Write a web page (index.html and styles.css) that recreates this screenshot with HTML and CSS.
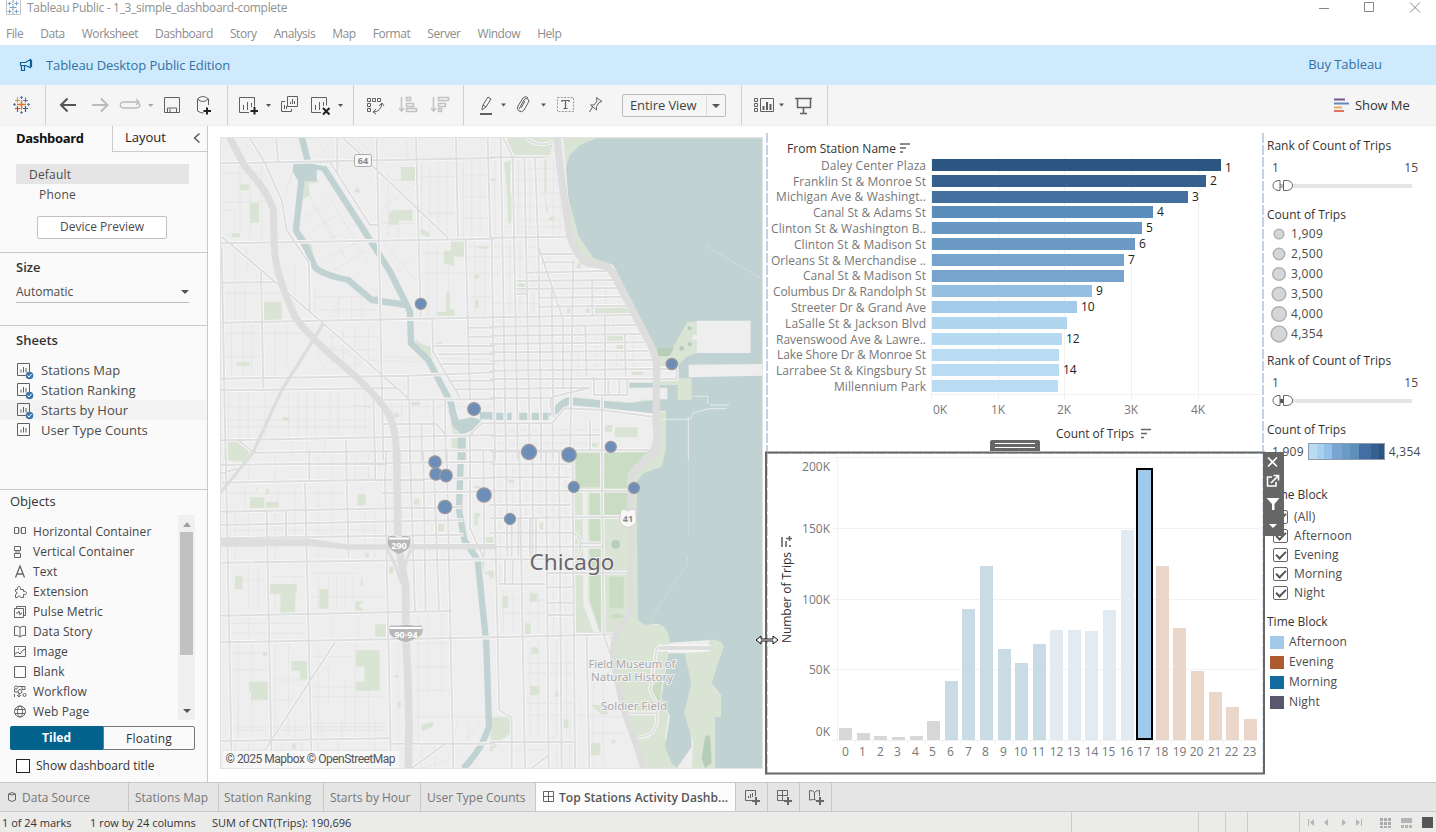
FILE: index.html
```html
<!DOCTYPE html>
<html lang="en">
<head>
<meta charset="utf-8">
<title>Tableau Public - 1_3_simple_dashboard-complete</title>
<link rel="stylesheet" href="styles.css">
</head>
<body>
<div class="app">
<header class="titlebar">
  <svg class="app-icon" width="16" height="16" viewBox="7 -1 16 16"><path d="M7.500-1V14.500H21.500V0" fill="none" stroke="#c4c4c4"/><path d="M14 4v7M10.500 7.500h7M10.500 1.500v4M8.500 3.500h4M17.500 1.500v4M15.500 3.500h4M10.500 9.500v4M8.500 11.500h4M17.500 9.500v4M15.500 11.500h4M14 0v3M14 12v2" stroke="#77a3cd" fill="none"/></svg>
  <span class="title-text">Tableau Public - 1_3_simple_dashboard-complete</span>
  <svg class="window-buttons" width="104" height="16" viewBox="1318 0 104 16"><path d="M1319 8.500h10M1364.500 2.500h9v9h-9zM1410 2.500l10 10m0-10l-10 10" fill="none" stroke="#888"/></svg>
</header>
<nav class="menubar"><span>File</span><span>Data</span><span>Worksheet</span><span>Dashboard</span><span>Story</span><span>Analysis</span><span>Map</span><span>Format</span><span>Server</span><span>Window</span><span>Help</span></nav>
<div class="banner">
  <svg width="14" height="14" viewBox="19 58 14 14"><path d="M20.500 62.500h5l5-3v8l-5-2h-5zM21.500 65.500v5h3v-5M31.500 60v7" fill="none" stroke="#07629b" stroke-width="1.200"/></svg>
  <span class="edition">Tableau Desktop Public Edition</span><span class="buy">Buy Tableau</span>
</div>
<div class="toolbar">
  <svg width="45" height="40" viewBox="0 85 45 40" fill="none" stroke-width="1.200">
    <path d="M21.500 100.500v9M17 104.500h9" stroke="#e0762e" stroke-width="1.500"/><path d="M17.500 97.500v5M15 100.500h5" stroke="#c99b45"/><path d="M25.500 97.500v5M23 100.500h5" stroke="#5d7896"/><path d="M17.500 106v6M15 108.500h5" stroke="#b54a34"/><path d="M25.500 106v6M23 108.500h5" stroke="#345b8b"/><path d="M21.500 96v3M20 97.500h3M21.500 111v3M20 112.500h3M14.500 103v3M13 104.500h3M28.500 103v3M27 104.500h3" stroke="#5e83ad"/>
  </svg>
  <svg class="group" width="181" height="40" viewBox="46 85 181 40">
    <path d="M76 105H61M67.500 98.500L61 105l6.500 6.500" stroke="#555" stroke-width="2"/>
    <g stroke="#bbb" stroke-width="2"><path d="M92 105h15M101 98.500l6.500 6.500-6.500 6.500"/><path d="M138 103c4 3 1 5-2 5h-12c-5 0-5-6 0-6h14M136 99l3 3-3 3" stroke-width="1.300"/></g>
    <path d="M148 104h5.500l-2.700 3z" fill="#aaa" stroke="none"/>
    <path d="M164.500 97.500h15v15h-15zM167.500 112v-4h9v4M170 109v3"/>
    <path d="M197.500 99v12q3 2 6 2M197.500 99q5-5 11 0v6M197.500 99q5 5 11 0"/><path d="M207 107.500v7M203.500 111h7.500" stroke="#222" stroke-width="2"/>
  </svg>
  <svg class="group" width="125" height="40" viewBox="228 85 125 40">
    <path d="M249 112.500h-9.500v-15h15v9M243.500 110v-5M247.500 110v-8M251.500 107v-4"/><path d="M254.500 107v7.500M250.500 111h7.500" stroke="#222" stroke-width="2"/>
    <path d="M266 104h5l-2.500 3zM338 104h5l-2.500 3z" fill="#555" stroke="none"/>
    <path d="M287.500 96.500h10v10h-10zM285 101.500h-3.500v10h10V109M290.500 104v-2M292.500 104v-5M294.500 104v-3M284.500 109v-4M286.500 109v-3"/>
    <path d="M321 112.500h-9.500v-15h15v8M315.500 110v-5M319.500 110v-8M323.500 106v-4"/><path d="M323 108l6.500 6.500m0-6.500l-6.500 6.500" stroke="#222" stroke-width="2"/>
  </svg>
  <svg class="group" width="109" height="40" viewBox="354 85 109 40">
    <path d="M367.500 98.500h3v3h-3zM372.500 98.500h3v3h-3zM377.500 98.500h3v3h-3zM367.500 103.500h3v3h-3zM367.500 108.500h3v3h-3zM382 103q-1 9-9 9M379 106l3-3 2 3M376 109l-3 3 3 2"/>
    <g stroke="#c2c2c2"><path d="M401.500 97v14M399 108l2.500 3 2.500-3M406.500 97.500h4v3h-4zM406.500 103.500h7v3h-7zM406.500 108.500h10v3h-10z" stroke-width="1.500"/><path d="M433.500 97v14M431 108l2.500 3 2.500-3M438.500 97.500h10v3h-10zM438.500 103.500h7v3h-7zM438.500 108.500h3v3h-3z" stroke-width="1.500"/></g>
  </svg>
  <svg class="group" width="158" height="40" viewBox="464 85 158 40">
    <path d="M480 114h12" stroke-width="2"/><path d="M482 109l1-4 5-8 3 2-5 8-4 3zM483 105l3 2"/>
    <path d="M501 103.500h5l-2.500 3zM541 103.500h5l-2.500 3z" fill="#555" stroke="none"/>
    <path d="M519 109l5-9q2-3 4-1t0 4l-4 7q-2 3-5 1t-1-5l5-8q3-3 5 0M521 108l4-7"/>
    <path d="M557.500 97.500h16v14h-16z" stroke-dasharray="2 1.300" stroke="#999"/><path d="M562 102v-1.500h7v1.500M565.500 100.500v8M563.500 108.500h4" stroke-width="1.200"/>
    <path d="M596.500 97.500l5.500 4-3 1-2.500 4v3.500l-6-5h3.500l3-4zM592.500 107l-3 5"/>
  </svg>
  <div class="fit-select"><span>Entire View</span><div><b class="caret"></b></div></div>
  <svg width="15" height="40"></svg>
  <svg class="group" width="85" height="40" viewBox="742 85 85 40">
    <path d="M754.500 98.500h3v3h-3zM754.500 103.500h3v3h-3zM754.500 108.500h3v3h-3zM760.500 98.500h13v13h-13z"/><path d="M763.500 110v-4M767 110v-8M770.500 110v-6" stroke-width="2"/><path d="M779 103.500h5l-2.500 3z" fill="#555" stroke="none"/>
    <path d="M795 98.500h17M797.500 99v8.500h13V99M803.500 108v5M800 113.500h7" stroke-width="1.500"/>
  </svg>
  <svg class="group" width="2" height="40"></svg>
  <div class="show-me"><svg width="16" height="14" viewBox="0 0 16 14"><path d="M0 1.500h11" stroke="#725a86" stroke-width="2"/><path d="M0 5.500h15" stroke="#6487c0" stroke-width="2"/><path d="M0 9.500h8" stroke="#edaa67" stroke-width="2"/><path d="M0 13h10" stroke="#dd765c" stroke-width="2"/></svg>Show Me</div>
</div>

<main class="workspace">
<aside class="sidebar">
  <div class="side-tabs"><b>Dashboard</b><div>Layout<svg width="8" height="10" viewBox="0 0 8 10"><path d="M6.500 0.500l-5 4.500 5 4.500" fill="none" stroke="#555" stroke-width="1.400"/></svg></div></div>
  <section class="devices"><div class="device selected">Default</div><div class="device phone">Phone</div><div class="preview">Device Preview</div></section>
  <section class="size"><h3>Size</h3><div class="size-select">Automatic<i class="caret"></i></div></section>
  <section class="sheets"><h3>Sheets</h3>
    <div class="sheet"><svg class="si" viewBox="0 0 17 18"><use href="#sheet"/><use href="#check"/></svg>Stations Map</div>
    <div class="sheet"><svg class="si" viewBox="0 0 17 18"><use href="#sheet"/><use href="#check"/></svg>Station Ranking</div>
    <div class="sheet hovered"><svg class="si" viewBox="0 0 17 18"><use href="#sheet"/><use href="#check"/></svg>Starts by Hour</div>
    <div class="sheet"><svg class="si" viewBox="0 0 17 18"><use href="#sheet"/></svg>User Type Counts</div>
  </section>
  <section class="objects"><h3>Objects</h3>
    <div class="object-area"><div class="object-list">
      <div><svg viewBox="0 0 13 13"><path d="M.5 2.500h4v6h-4zM7.500 2.500h4v6h-4z"/><path d="M5 3h2v5H5z" fill="#ccc" stroke="none"/></svg>Horizontal Container</div>
      <div><svg viewBox="0 0 13 13"><path d="M.5 1.500h6v4h-6zM.5 8.500h6v4h-6z"/><path d="M1 6h5v2H1z" fill="#bbb" stroke="none"/></svg>Vertical Container</div>
      <div><svg viewBox="0 0 13 13"><path d="M1.500 12.500L6 1l4.500 11.500M3 9h6" stroke-width="1.300"/></svg>Text</div>
      <div><svg viewBox="0 0 13 13"><path d="M1.500 4.500h2c-1-4 4-4 3 0h3v2c4-1 4 4 0 3v3h-3c0-2-3-2-3 0h-2v-3c2 0 2-3 0-3z"/></svg>Extension</div>
      <div><svg viewBox="0 0 13 13"><path d="M.5 3.500h9v9h-9zM2.500 3V1.500h9v9H10M2 8h2l1-2 1 4 1-2h1"/></svg>Pulse Metric</div>
      <div><svg viewBox="0 0 13 13"><path d="M.5 1.500q3-1 5.500 1 2.500-2 5.500-1v9q-3-1-5.500 1.500-2.500-2.500-5.500-1.500zM6 2.500V12"/></svg>Data Story</div>
      <div><svg viewBox="0 0 13 13"><path d="M.5 1.500h11v10H.5zM1 9l3-2 2 2 3-4 3-1M4 4h1"/></svg>Image</div>
      <div><svg viewBox="0 0 13 13"><path d="M.5 1.500h11v11H.5z"/></svg>Blank</div>
      <div><svg viewBox="0 0 13 13"><circle cx="2" cy="2.500" r="1.500"/><circle cx="6" cy="6.500" r="2"/><circle cx="10.500" cy="10" r="1.500"/><path d="M4 1.500h7v3H8M4 7H.5V4M5 8v4M3 10l2 2 2-2M8 2v2M.5 12v-3"/></svg>Workflow</div>
      <div><svg viewBox="0 0 13 13"><circle cx="6" cy="6.500" r="5.500"/><ellipse cx="6" cy="6.500" rx="2.500" ry="5.500"/><path d="M1 4.500h10M1 8.500h10"/></svg>Web Page</div>
    </div><div class="scroll"><i class="up"></i><b></b><i class="caret"></i></div></div>
    <div class="mode"><b>Tiled</b><span>Floating</span></div>
    <div class="show-title"><i></i>Show dashboard title</div>
  </section>
</aside>

<svg class="map" width="543" height="632" viewBox="220 137 543 632">
<defs>
  <g id="sheet" fill="none" stroke="#606060"><path d="M.5.500h12v12H.5zM4 9.500v-3M6.500 9.500V4M9 9.500V5"/></g>
  <g id="check"><circle cx="12.500" cy="12.500" r="3.800" fill="#3e78ad"/><path d="M10.500 12.500l1.500 1.500 2.500-3" fill="none" stroke="#fff"/></g>
  <g id="streets">
    <g transform="translate(215 130) scale(.33333)"><path d="M18 100L840 84M18 340L840 326M18 458L180 456M18 578L840 562M18 746L580 737 840 727M18 781L545 774M505 809L840 808M18 931L840 915M115 968L840 960M20 350L32 990M138 425L145 775M485 25L505 990M603 25L617 560M723 25L729 320M818 25L826 325M752 330L765 810M367 25V130M183 25L190 95M105 25L150 100 200 210 215 300 282 400 284 545M20 320L180 455 330 585 580 805M385 25L700 325M345 97L465 285H487M580 740V805M652 568L654 665 735 803M655 648H840M670 673H840M680 702H840M700 752H840M720 778H840M760 593H840M760 620H840M505 882H665L692 915M475 810L480 990M583 810L585 990M620 882V990M655 810L658 990M690 810L692 990M765 990V915L800 880H840M393 930L395 990M70 931L115 966"/></g>
    <g transform="translate(490 130) scale(.33333)"><path d="M0 82H170M0 323L230 320M150 372H250M155 397H255M110 428L370 422M80 453L375 450M80 477L390 474M80 492H112M150 503L402 500M150 530L415 527M0 562L430 555M0 590L440 585M0 617L455 612M0 642L463 637M0 667L475 662M0 692L490 690M0 722L560 716M0 747H560V718M0 777L300 773M0 803H185M0 880H185L225 835 335 840 490 860M0 918L330 915M0 962L505 960M32 25L48 990M68 80L82 870M103 80L118 870M135 80L145 350 215 555M145 350L153 870M185 480L190 860M218 560L220 775M250 390L240 990M286 590L290 740M345 560L345 800M405 615L407 740M307 452V560M300 745H312V795H412V745M388 745V795M355 745V795M300 875V960M336 800V990M195 860Q170 815 190 800L300 773M5 325L15 990M82 880V990M118 880V990M153 880V990M188 880V990M40 25L68 80M110 25Q150 55 190 35"/></g>
    <g transform="translate(215 450) scale(.33333)"><path d="M18 45L840 35M18 98L840 83M18 70L75 55M500 130L840 124M18 185L740 171M18 225L745 210M18 265L745 254M18 338L840 328M18 497L710 483M18 577L840 562M18 873L523 865M530 881H840M32 0L50 955M155 180L170 955M213 180V260M270 95L290 955M283 0V90M393 0L401 325M510 80L528 955M480 0V90M585 0L600 485M625 0L632 485M658 90L672 485M695 0L715 955M765 0V235L805 322M805 0L808 320M360 577L150 900M590 955L690 882M515 0L510 90M840 285H600"/></g>
    <g transform="translate(490 450) scale(.33333)"><path d="M0 5H240M0 43H240M0 82H240M0 122H420M0 165H240M0 205L420 200M0 248H250M0 290H335M0 328H170M170 370L415 368M25 402H165M170 412H250M170 458H250M170 495H250M0 562L380 553M0 876H250M10 0L28 780 65 803V955M48 0L52 320M88 0L105 955M128 0V328M168 0L176 955M207 0L215 955M247 0L255 955M290 560L298 955M335 0L341 550M45 325V400M68 325V400M85 205V320M120 205V320M138 205V320M65 205V320M176 915L125 955M340 550L370 640M250 250Q275 260 270 288 272 320 250 325M270 280H332M415 790H500M500 595H660M500 595L480 720 500 760 500 820Q490 860 445 862"/></g>
  </g>
  <g id="highways">
    <g transform="translate(215 130) scale(.33333)"><path stroke-width="21" d="M40 15L90 110Q160 185 175 240L178 350Q180 430 240 560 280 620 400 720 490 800 520 850 545 890 545 1000"/><path stroke-width="10" d="M325 580L295 630 200 780 115 966 95 990"/></g>
    <g transform="translate(490 130) scale(.33333)"><path stroke-width="22" d="M200 15L215 150 240 320Q260 380 295 400L345 408Q362 415 375 440L490 660 500 700 498 880 505 930Q505 950 480 970L430 1030"/></g>
    <g transform="translate(215 450) scale(.33333)"><path stroke-width="23" d="M545 0L549 280 572 410V560L578 660 582 830 580 955"/><path stroke-width="16" d="M15 282L280 280 400 291 840 290"/><path stroke-width="9" d="M120 0L15 130M15 270L280 270 380 286M515 300Q530 310 560 400M590 300Q570 320 565 400"/></g>
    <g transform="translate(490 450) scale(.33333)"><path stroke-width="17" d="M505 0L440 50Q418 75 420 110L421 490 380 550Q364 575 370 640L400 780 465 960"/></g>
  </g>
</defs>
<path d="M220 137h543v632H220z" fill="#eee"/>
<g class="lanes">
  <g transform="translate(215 130) scale(.33333)"><path d="M18 130H140M18 218L165 213M75 105V320M105 120V320M140 105V330M18 240H60V340M60 350V450M95 350V420M300 25L345 85M405 25L475 110M430 25L485 85M240 100L205 215M275 180L400 400M290 220L360 340M330 180L460 400M345 145L560 470M260 270L330 220M280 310L390 240M310 350L440 270M330 390L470 310M360 420L490 340M500 330L600 450M520 380L560 340M540 430L600 380M500 240L600 160M520 130V320M550 260V320M575 30V90M500 150H600M500 280H600M620 100V320M645 100V325M670 90V290M695 90V320M745 95V322M770 90V322M795 90V322M615 140H720M615 250H720M740 135H825M740 200H825M740 265H825M615 430H750M640 340V560M665 350V560M700 400V560M620 370H750M760 350H840M760 380H840M760 430H840M780 330V560M810 340V560M760 500H840M25 490H200M60 460V570M90 460V570M240 400V540M300 480V570M370 500V570M410 500V570M440 500V570M300 500H490M300 540H490M18 610H260M50 585V740M85 585V740M110 585V740M180 585V740M215 585V700M25 680H140M350 600V700M385 600V700M420 590V720M460 590V700M340 620H500M340 660H500M310 640Q300 720 360 720L490 680 840 690M440 700Q410 710 420 740M380 500L320 590M320 640L440 690 750 700M40 785V925M75 785V925M100 785V925M150 785V925M220 785V925M250 785V925M275 785V925M300 785V925M345 785V925M370 785V925M420 785V925M450 785V925M35 830H470M35 870H470M35 890H470M230 935V980M275 935V980M330 935V980M505 830H840M530 810V880M560 810V880"/></g>
  <g transform="translate(490 130) scale(.33333)"><path d="M50 115H210M50 150H205M50 190H215M50 230H220M50 270H220M50 290H220M15 90V320M85 90V320M120 90V320M190 90V320M210 150V320M15 350H140M15 380H140M15 430H75M60 330V550M90 330V550M130 440V550M15 520H150M347 450V555M370 540V600M320 530H420M265 590V760M320 620V720M380 620V710M430 620V710M20 900H330M20 940H330"/></g>
  <g transform="translate(215 450) scale(.33333)"><path d="M60 10V90M100 10V90M180 10V90M310 10V90M350 10V90M420 10V90M460 10V90M90 110V180M190 110V180M240 110V180M310 110V180M350 110V180M440 110V180M30 130H390M60 190V330M100 190V260M180 190V330M240 190V260M310 190V325M350 190V260M450 190V325M480 190V325M40 240H500M100 340V480M130 360V480M50 390H150M170 380H270M180 400V480M240 390V480M290 370H430M310 380V480M340 380V480M365 380V480M390 380V470M415 380V450M290 440H510M50 520H270M50 550H270M100 500V560M350 500V560M430 500V560M70 580V850M110 580V850M180 580V860M220 580V860M310 600V860M340 650V770M390 690V830M420 580V860M460 600V860M50 610H160M50 660H160M170 690H270M170 750H270M290 620H410M290 710H500M290 740H500M290 820H510M50 830H510M30 840H510M70 810V865M190 810V865M240 810V865M320 810V865M380 810V865M480 810V865M550 580V940M610 500V880M640 490V730M680 490V730M600 580H710M600 650H710M600 720H710M600 800H820M760 820V880M30 900H520M60 870V955M100 870V955M200 870V955M260 870V955M310 870V955M370 870V955M480 870V955M620 880V955M660 880V955M730 810L700 930 620 955M800 810L720 920"/></g>
  <g transform="translate(490 450) scale(.33333)"><path d="M40 420V550M70 420V550M120 420V550M145 420V550M40 450H165M40 490H165M120 570V860M145 570V860M110 640H250M110 670H250M110 760H250M110 795H350M200 570V860M230 570V860M240 800V950M310 700V940M340 700V940M300 850H400M300 800H400M200 890V950M70 900H170M30 40V400M68 0V200M108 0V200M150 0V200M190 0V550M228 0V550"/></g>
</g>
<g class="parks">
  <g transform="translate(215 130) scale(.33333)"><path d="M558 111h42v42h-42zM105 219h27v59h-27zM50 310h25v12H50zM75 163h27v18H75zM147 515h53v55h-53zM65 697h38v11H65zM202 862h22v10h-22zM522 250l15-10h55v32h-35v-8l-10 20h-24zM708 332h39v48h-30v30l-30-10v-38h21zM693 488h12v50h14v20h-52v-12h26zM418 185l8-15 12 20zM615 295l27 12v15l-25-10zM777 435h15v10h-15zM780 510h12v25h-12zM790 348h28v8h-28zM824 145h16v8h-16zM258 150h52v8l-30 2 5 35-25 15zM245 295l45 50 8 50-25-30zM600 627l20 15 28 8v30l-45-25zM395 825l75 3v5zM585 815h30v11h-30zM537 848h14v14h-14zM665 637h15v10h-15zM705 870l20 35 30 10-40 0zM38 935h40l30 25-20 30H40zM710 925h20v30h-20zM470 500l20-5v10z"/></g>
  <g transform="translate(490 130) scale(.33333)"><path d="M50 25H190L180 75H70zM220 25H330L245 80 230 130 270 310 310 385 345 395 270 405 245 320zM82 460h23v28H82zM42 100l20-10-2 90 8 20-5 80h-8l-5-110zM163 85h6v105h-6zM163 190l12 55-5 5zM177 260h16v12h-16zM265 395l10 20h-15zM315 528h90l15 22H315zM288 535h11v14h-11zM232 535h12v15h-12zM350 617h52v16h-52zM380 645h22v12h-22zM425 725h35v10h-35zM350 750h10v35h-10zM500 665l55-15 37-75h28v95l-30 10-25 30 3 27h40v65h-42v-45h-55zM345 885h22v20h-22zM375 892h68v30h-68zM500 845h29v145h-50zM305 940h18v10h-18zM255 965h200l20 25H255zM340 812l-60-10 60 20h130v-15l-40 10z"/></g>
  <g transform="translate(215 450) scale(.33333)"><path d="M38 0h65l-18 35-47-5zM105 142h43v32h-43zM153 155h37v18h-37zM153 118h10v15h-10zM427 132h25v34h-25zM60 377h22v40H60zM165 402h80v30h-5v57h-44v-57h-31zM313 418h27v58h-27zM421 454h26l-16 14 16 14h-26zM480 523h32v37h-32zM423 600h71v122h-71v-27h25v-45h-25zM102 695h57v56h-51v-25h-6zM229 633h48v55h-22v-26h-26zM144 605h12v12h-12zM232 880h10v17h-10zM547 754h10v18h-10zM618 825l36-10v15l-32 14zM522 350h14v20h-14zM668 222h18v22h-18zM597 148h16v16h-16zM437 388h6v20h-6zM452 308h10v14h-10zM120 103l10 18-5 0zM776 107h20v8h-20zM778 190h20l-10 15v20h-10zM812 262h28v16h-28zM538 675h12v8h-12zM808 370l-10-40 10 0v36l32-5v25z"/></g>
  <g transform="translate(490 450) scale(.33333)"><path d="M250 0H527L515 50 460 75 441 100 443 510 465 525 525 525 545 550 535 600 515 720 535 800 525 860 555 955H450L400 780 370 640 370 570 340 548H258zM120 430h22v25h-22zM38 438h16v36H38zM105 520h17v32h-17zM124 592h20v20h-20zM121 708h28v28h-28zM195 725h10v15h-10zM303 878h28v38h-28zM220 808h15v25h-15zM150 218h9v20h-9zM55 88h18v10H55zM5 800h58v50l-30 20-33 40zM364 870h12v10h-12zM185 860h8v5h-8zM303 765h50v28h-20zM0 260l10 10-10 10zM0 360l10 15-10 15z"/></g>
</g>
<g class="water">
  <g transform="translate(215 130) scale(.33333)"><path d="M250 20H270L288 92 268 92zM235 102L285 100 325 108 340 123 305 120 305 153 250 154 233 125zM700 840L720 840 732 870 770 862 800 870 775 900 740 915 715 890zM795 846h45v22h-45zM728 920h24v70h-24z"/><path class="river" d="M260 145L243 300 275 355 300 412Q320 433 400 450L470 510 575 525M325 112L440 290 525 425 585 545 588 640 640 690 708 820 722 885"/></g>
  <g transform="translate(490 130) scale(.33333)"><path d="M320 25L818 25V990H528V842L505 843 505 670 370 405 310 385 265 315 235 200 228 110 240 75 270 45zM0 848h65v22H0zM80 848h35v22H80zM125 848h50v22h-50zM175 855Q210 800 245 802L340 812 420 820 490 810V850L330 833 235 825 195 860zM415 758h75v15h-75z"/></g>
  <g transform="translate(215 450) scale(.33333)"><path class="river" d="M738 0L732 180 748 270 788 330 814 580 822 830Q800 900 745 955"/></g>
  <g transform="translate(490 450) scale(.33333)"><path d="M527 0H818V955H675V800H693V735L665 700Q670 650 690 620L701 590Q690 567 660 570L540 578Q535 525 500 522L465 525 443 510 440 95 460 70 515 50zM535 610H585L605 700 583 790 600 830 605 890 560 955 545 940 525 890 540 800 515 740z"/></g>
</g>
<g transform="translate(490 130) scale(.33333)"><path d="M500 665l50-15 42-75h28v95l-30 10-25 25-5 40h45v65h-42v-45h-55z" class="park-fill"/><path d="M498 655l55-3-15 27h-35z" fill="#b8ceb9"/><path d="M620 572h162v97H620v-40h-13v-14h13zM596 704l222-2v35l-222 5zM470 773h62v35h-55zM505 708h60v40h-60z" fill="#eee"/><path d="M652 349L816 447" stroke="#e5e9e9" stroke-width="2" stroke-dasharray="4 2"/><path d="M608 799h45v23M600 870l10-22 50-12h50M660 825h58M595 860V990M490 868h105" fill="none" stroke="#e7ebeb" stroke-width="3"/><circle cx="575" cy="655" r="7" fill="#b4cdb8"/><circle cx="599" cy="595" r="6" fill="#b4cdb8"/><circle cx="599" cy="643" r="6" fill="#b4cdb8"/></g>
<g transform="translate(490 450) scale(.33333)"><path d="M660 568Q698 570 701 590L690 622 665 700 693 735V800H675V955H605L610 880 583 790 605 700 585 610 650 605z" class="park-fill"/><path d="M258 10H330V110H258zM343 10L485 5 412 70V195H343zM300 130H332V548L300 450zM358 380h43v95h-43zM355 498l30-8 20 10-30 8zM515 690l-30 20v60l25-20z" fill="#cadcc3"/><circle cx="377" cy="283" r="13" fill="#b5cdb9"/><path d="M645 860l15-5 5 85-20 15-10-30z" fill="#b5cdb9"/><path d="M278 120l15 0 2 330 35 100-20-5-30-80z" fill="#eee"/><path d="M593 320L590 345 480 510M596 0V250" fill="none" stroke="#dfe5e4" stroke-width="2" stroke-dasharray="4 2"/></g>
<use href="#streets" class="road casing"/><use href="#streets" class="road"/>
<g class="highway-edge wide"><use href="#highway-outline"/></g>
<use href="#highways" class="highway"/>
<g transform="translate(490 450) scale(.33333)"><path d="M505 594H660" stroke="#fff" stroke-width="20"/><path d="M505 594H660" stroke="#dedede" stroke-width="13"/></g>
<g class="shields"><rect x="354.500" y="154.500" width="17" height="12" rx="2" fill="#f7f7f7" stroke="#aaa"/><text x="363" y="164" fill="#888">64</text><path d="M621 510l3-1 4 2 4-2 4 1v6c2 10-5 10-8 12-3-2-10-2-8-12z" fill="#f8f8f8" stroke="#ccc"/><text x="628" y="521.500" fill="#888">41</text><path d="M388 536l5-1 6 2 6-2 5 1c4 13-5 15-11 19-6-4-15-6-11-19z" fill="#b8b8b8" stroke="#eee"/><path d="M389 538.500h20" stroke="#fff" stroke-width="2"/><text x="399" y="549" fill="#fff">290</text><path d="M390 625q9 1 16-1 8 2 16 1c5 12-7 14-16 18-10-4-21-6-16-18z" fill="#b8b8b8" stroke="#eee"/><path d="M390 628h32" stroke="#fff" stroke-width="2"/><text x="406" y="638" fill="#fff">90·94</text></g>
<g class="place"><text x="572" y="570" class="city">Chicago</text><text x="632" y="668" textLength="87">Field Museum of</text><text x="632" y="681" textLength="82">Natural History</text><text x="634" y="710" textLength="66">Soldier Field</text></g>
<g class="stations"><circle cx="420.800" cy="303.800" r="5.500"/><circle cx="474" cy="409" r="6.300"/><circle cx="671.800" cy="364" r="5.700"/><circle cx="529" cy="452" r="7.500"/><circle cx="569" cy="454.800" r="7.200"/><circle cx="610.800" cy="446.800" r="5.500"/><circle cx="435" cy="462" r="6.200"/><circle cx="436" cy="474" r="6.200"/><circle cx="446" cy="475.700" r="6.200"/><circle cx="484" cy="495" r="7.200"/><circle cx="445" cy="507" r="6.700"/><circle cx="573.800" cy="487" r="5.500"/><circle cx="634" cy="488" r="5.500"/><circle cx="510" cy="519" r="5.500"/></g>
<path d="M220.500 137.500h542v631h-542z" fill="none" stroke="#e2e2e2"/>
<path d="M223 751h176v17H223z" fill="#f8f8f8" opacity=".85"/><text x="225.500" y="763" class="credit" textLength="170">© 2025 Mapbox © OpenStreetMap</text>
</svg>

<div class="charts">
<svg class="ranking" width="499" height="318" viewBox="766 133 499 318">
  <path d="M767 133v318M1263 133v318" class="zone-edge"/>
  <path d="M931.500 157v242M998.500 157v242M1064.500 157v242M1131.500 157v242M1198.500 157v242M931 394.500h328" stroke="#f0f0f0"/>
  <text x="787" y="153" class="head" textLength="109">From Station Name</text><path d="M900 144h10M900 148h6M900 152h3M1141 429.500h10M1141 433.500h6M1141 437.500h3" stroke="#666" stroke-width="1.600"/>
  <g class="names"><text x="926" y="170" textLength="105">Daley Center Plaza</text><text x="926" y="186" textLength="133">Franklin St &amp; Monroe St</text><text x="926" y="201" textLength="150">Michigan Ave &amp; Washingt..</text><text x="926" y="217" textLength="113">Canal St &amp; Adams St</text><text x="926" y="233" textLength="155">Clinton St &amp; Washington B..</text><text x="926" y="249" textLength="132">Clinton St &amp; Madison St</text><text x="926" y="265" textLength="155">Orleans St &amp; Merchandise ..</text><text x="926" y="280" textLength="123">Canal St &amp; Madison St</text><text x="926" y="296" textLength="153">Columbus Dr &amp; Randolph St</text><text x="926" y="312" textLength="135">Streeter Dr &amp; Grand Ave</text><text x="926" y="328" textLength="141">LaSalle St &amp; Jackson Blvd</text><text x="926" y="344" textLength="150">Ravenswood Ave &amp; Lawre..</text><text x="926" y="359" textLength="149">Lake Shore Dr &amp; Monroe St</text><text x="926" y="375" textLength="150">Larrabee St &amp; Kingsbury St</text><text x="926" y="391" textLength="92">Millennium Park</text></g>
  <g><path fill="#2b5681" d="M932 159h289v12H932z"/><path fill="#36618f" d="M932 175h274v12H932z"/><path fill="#44709f" d="M932 191h256v12H932z"/><path fill="#5b8dba" d="M932 206h221v12H932z"/><path fill="#6696c1" d="M932 222h210v12H932z"/><path fill="#6b9bc5" d="M932 238h203v12H932z"/><path fill="#77a4cd" d="M932 254h192v12H932zM932 270h192v12H932z"/><path fill="#94bfe1" d="M932 285h160v12H932z"/><path fill="#a3cbe9" d="M932 301h145v12H932z"/><path fill="#b0d5ef" d="M932 317h135v12H932z"/><path fill="#b6daf1" d="M932 333h130v12H932z"/><path fill="#b9dcf2" d="M932 349h127v12H932zM932 364h127v12H932zM932 380h126v12H932z"/></g>
  <g class="marks"><text x="1225" y="172">1</text><text x="1210" y="185">2</text><text x="1192" y="201">3</text><text x="1157" y="216">4</text><text x="1146" y="232">5</text><text x="1139" y="248">6</text><text x="1128" y="264">7</text><text x="1096" y="295">9</text><text x="1081" y="311">10</text><text x="1066" y="343">12</text><text x="1063" y="374">14</text></g>
  <g class="axis mid"><text x="940" y="414">0K</text><text x="998" y="414">1K</text><text x="1064" y="414">2K</text><text x="1131" y="414">3K</text><text x="1198" y="414">4K</text></g>
  <text x="1056" y="438" class="head" textLength="78">Count of Trips</text><path d="M990 451v-9q0-2 2-2h46q2 0 2 2v9z" fill="#666"/><path d="M995 443.500h40M995 447.500h40" stroke="#fff"/>
</svg>
<svg class="hours" width="499" height="324" viewBox="766 451 499 324">
  <path d="M767.500 454v319M1263 454v319M768 453.500h495" class="zone-edge thin"/>
  <path d="M832 457.500h427M832 528.500h427M832 599.500h427M832 669.500h427M832 740.500h427M837.500 457v286M855.500 740v4M872.500 740v4M890.500 740v4M907.500 740v4M925.500 740v4M942.500 740v4M960.500 740v4M977.500 740v4M995.500 740v4M1013.500 740v4M1030.500 740v4M1048.500 740v4M1065.500 740v4M1083.500 740v4M1100.500 740v4M1118.500 740v4M1135.500 740v4M1153.500 740v4M1171.500 740v4M1188.500 740v4M1206.500 740v4M1223.500 740v4M1241.500 740v4" stroke="#f2f2f2"/>
  <path fill="#d6d7d9" d="M839 728h13v12h-13zM857 733h13v7h-13zM874 736h13v4h-13zM892 737h13v3h-13zM910 736h13v4h-13zM927 721h13v19h-13z"/>
  <path fill="#c9dbe4" d="M945 681h13v59h-13zM962 609h13v131h-13zM980 566h13v174h-13zM998 649h13v91h-13zM1015 663h13v77h-13zM1033 644h13v96h-13z"/>
  <path fill="#e2ebf1" d="M1050 630h13v110h-13zM1068 630h13v110h-13zM1085 631h13v109h-13zM1103 610h13v130h-13zM1121 530h13v210h-13z"/>
  <path fill="#ead7c9" d="M1156 566h13v174h-13zM1173 628h13v112h-13zM1191 671h13v69h-13zM1209 692h13v48h-13zM1226 707h13v33h-13zM1244 719h13v21h-13z"/>
  <path fill="#a1caea" stroke="#000" stroke-width="2" d="M1137 469h15v270h-15z"/>
  <g class="axis end"><text x="830" y="471">200K</text><text x="830" y="533">150K</text><text x="830" y="604">100K</text><text x="830" y="674">50K</text><text x="830" y="736">0K</text></g>
  <g class="axis mid hour"><text x="845.500" y="756">0</text><text x="862.500" y="756">1</text><text x="880.500" y="756">2</text><text x="897.500" y="756">3</text><text x="915.500" y="756">4</text><text x="932.500" y="756">5</text><text x="950.500" y="756">6</text><text x="968.500" y="756">7</text><text x="985.500" y="756">8</text><text x="1003.500" y="756">9</text><text x="1020.500" y="756">10</text><text x="1038.500" y="756">11</text><text x="1056.500" y="756">12</text><text x="1073.500" y="756">13</text><text x="1091.500" y="756">14</text><text x="1108.500" y="756">15</text><text x="1126.500" y="756">16</text><text x="1143.500" y="756">17</text><text x="1161.500" y="756">18</text><text x="1179.500" y="756">19</text><text x="1196.500" y="756">20</text><text x="1214.500" y="756">21</text><text x="1231.500" y="756">22</text><text x="1249.500" y="756">23</text></g>
  <text class="head" transform="translate(791 643) rotate(-90)" textLength="91">Number of Trips</text><path d="M782 537v10M786 541v6M790 545v2M786 538.500h6M789.500 536v5" stroke="#666" stroke-width="1.600"/>
  <path d="M766 452.500h498v321H766z" fill="none" stroke="#676767" stroke-width="2"/>
</svg>
<svg class="cursor" width="24" height="12" viewBox="0 0 24 12"><path d="M1 6l5-4v3h12V2l5 4-5 4V7H6v3z" fill="#fff" stroke="#111"/></svg>
</div>

<aside class="legends">
  <h4>Rank of Count of Trips</h4><div class="range"><span>1</span><span>15</span></div>
  <svg class="slider" width="142" height="14" viewBox="0 0 142 14"><path d="M13 7h128" stroke="#e5e5e5" stroke-width="4"/><path d="M8 7h5" stroke="#bbb" stroke-width="4"/><path d="M9 1.500v10H7q-5-1-5-5t5-5zM12.500 1.500v10h4q5-1 5-5t-5-5z" fill="#fff" stroke="#666"/></svg>
  <h4 class="size-head">Count of Trips</h4>
  <ul class="sizes"><li><svg viewBox="0 0 18 18"><circle cx="9" cy="9" r="4.800"/></svg>1,909</li><li><svg viewBox="0 0 18 18"><circle cx="9" cy="9" r="5.700"/></svg>2,500</li><li><svg viewBox="0 0 18 18"><circle cx="9" cy="9" r="6.300"/></svg>3,000</li><li><svg viewBox="0 0 18 18"><circle cx="9" cy="9" r="6.800"/></svg>3,500</li><li><svg viewBox="0 0 18 18"><circle cx="9" cy="9" r="7.300"/></svg>4,000</li><li><svg viewBox="0 0 18 18"><circle cx="9" cy="9" r="7.900"/></svg>4,354</li></ul>
  <h4 class="second">Rank of Count of Trips</h4><div class="range"><span>1</span><span>15</span></div>
  <svg class="slider" width="142" height="14" viewBox="0 0 142 14"><path d="M13 7h128" stroke="#e5e5e5" stroke-width="4"/><path d="M8 7h5" stroke="#555" stroke-width="4"/><path d="M9 1.500v10H7q-5-1-5-5t5-5zM12.500 1.500v10h4q5-1 5-5t-5-5z" fill="#fff" stroke="#666"/></svg>
  <h4 class="color-head">Count of Trips</h4><div class="ramp"><span>1,909</span><i></i><span>4,354</span></div>
  <h4 class="filter-head">Time Block</h4>
  <ul class="filter"><li><i></i>(All)</li><li><i></i>Afternoon</li><li><i></i>Evening</li><li><i></i>Morning</li><li><i></i>Night</li></ul>
  <h4 class="block-head">Time Block</h4>
  <ul class="swatches"><li><i class="afternoon"></i>Afternoon</li><li><i class="evening"></i>Evening</li><li><i class="morning"></i>Morning</li><li><i class="night"></i>Night</li></ul>
  <svg class="zone-menu" width="21" height="84" viewBox="0 0 21 84"><path d="M0 0h21v84H0z" fill="#666"/><path d="M5 5.500l9 9m0-9l-9 9M9 25H4.500v9H13v-4M8 31l7-7M10.500 23.500h5v5" fill="none" stroke="#fff" stroke-width="1.600"/><path d="M3.500 46h13l-5 6v6H9v-6zM6 72h8l-4 4z" fill="#fff"/></svg>
</aside>
</main>

<nav class="tabs"><div class="t-source"><svg width="10" height="12" viewBox="0 0 10 12"><path d="M1.500 3v6q3.500 3 7 0V3q-3.500-3-7 0 3.500 2 7 0"/></svg>Data Source</div><div class="t-map">Stations Map</div><div class="t-rank">Station Ranking</div><div class="t-hour">Starts by Hour</div><div class="t-user">User Type Counts</div><div class="t-active"><svg width="12" height="12" viewBox="0 0 12 12"><path d="M.5.500h10v10H.5zM5.500.500v10M.5 5.500h10"/></svg>Top Stations Activity Dashb...</div>
<div class="t-new"><svg width="16" height="15" viewBox="0 0 16 15"><path d="M7 10.500H.5v-10h10V6M3.500 8V6M5.500 8V4M7.500 7V3"/><path d="M11 7v8M7 11h8" stroke-width="2"/></svg></div><div class="t-new"><svg width="16" height="15" viewBox="0 0 16 15"><path d="M7 10.500H.5v-10h10V6M5.500.500v10M.5 5.500h10"/><path d="M11 7v8M7 11h8" stroke-width="2"/></svg></div><div class="t-new"><svg width="16" height="15" viewBox="0 0 16 15"><path d="M7 10q-2-1-6.500 0V.5q4 0 5 2 1-2 5-2V6M5.500 2v8"/><path d="M11 7v8M7 11h8" stroke-width="2"/></svg></div></nav>
<footer class="status"><span class="marks-count">1 of 24 marks</span><span class="dims">1 row by 24 columns</span><span class="sum">SUM of CNT(Trips): 190,696</span><svg width="366" height="20" viewBox="1070 812 366 20"><path d="M1071.500 812v20M1198.500 812v20M1225.500 812v20M1247.500 812v20M1299.500 812v20" stroke="#ccc"/><path d="M1314 819v7l-4-3.500zM1328 819v7l-4-3.500zM1342 819v7l4-3.500zM1356 819v7l4-3.500zM1308 819h1v7h-1zM1361 819h1v7h-1zM1401 818h11v5h-11zM1401 825h3v3h-3zM1405 825h3v3h-3zM1409 825h3v3h-3z" fill="#b5b5b5"/><path d="M1380 818h3v3h-3zM1384 818h3v3h-3zM1388 818h3v3h-3zM1380 822h3v3h-3zM1384 822h3v3h-3zM1388 822h3v3h-3zM1380 826h3v2h-3zM1384 826h3v2h-3zM1388 826h3v2h-3z" fill="#aaa"/><path d="M1422 817h11v11h-11z" fill="#555"/></svg></footer>
</div>
</body>
</html>
```
FILE: styles.css
```css
*{box-sizing:border-box}
body{margin:0;font:12px/20px "Open Sans","Noto Sans",sans-serif;color:#4c4c4c;background:#fff;overflow:hidden}
svg{display:block;flex:none}
h3,h4,ul{margin:0;padding:0;list-style:none}
.app{width:1436px;height:832px;display:flex;flex-direction:column;overflow:hidden}
.titlebar{height:18px;display:flex;padding-left:6px;color:#909090;flex:none}
.app-icon{margin-top:-1px}
.title-text{line-height:16px;margin-left:5px;letter-spacing:-.31px}
.window-buttons{margin-left:auto;margin-right:14px}
.menubar{height:27px;padding-left:6px;display:flex;gap:17px;line-height:32px;color:#8c8c8c;flex:none;letter-spacing:-.45px}
.banner{height:40px;flex:none;background:#cfe9fd;display:flex;align-items:center;padding:0 54px 0 19px;color:#3373a2;font-size:13px}
.edition{margin-left:13px;letter-spacing:-.1px}.buy{margin-left:auto;letter-spacing:-.05px;line-height:18px;padding-bottom:2px}
.toolbar{height:41px;flex:none;background:#f5f5f5;display:flex;align-items:center;border-bottom:1px solid #eee}
.group{fill:none;stroke:#606060;box-shadow:-1px 0 #d0d0d0;margin-left:1px}
.fit-select{width:104px;height:23px;border:1px solid #bbb;border-radius:2px;display:flex;font-size:13px;line-height:20px;padding-left:7px;justify-content:space-between;color:#444;letter-spacing:-.1px}
.fit-select div{border-left:1px solid #ddd;padding:9px 5px 0}
.fit-select .caret{display:block}
.caret{width:0;height:0;border:4px solid transparent!important;border-top-color:#555!important;border-bottom:0!important}
.show-me{margin-left:auto;width:102px;display:flex;gap:5px;align-items:center;font-size:13px;line-height:18px;padding-bottom:1px;color:#333;letter-spacing:-.1px}
.workspace{height:656px;flex:none;display:flex;position:relative}
.sidebar{width:208px;border-right:1px solid #c9c9c9;background:#fafafa;flex:none;display:flex;flex-direction:column}
.side-tabs{display:flex;height:26px;font-size:13px;line-height:25px;color:#222;flex:none}
.side-tabs b{width:112px;padding-left:16px;color:#111;letter-spacing:-.35px}
.side-tabs div{flex:1;border-left:1px solid #ccc;border-bottom:1px solid #ccc;padding:0 6px 2px 12px;display:flex;justify-content:space-between;align-items:center}
.devices{height:101px;padding:12px 18px 0 16px;border-bottom:1px solid #c9c9c9}
.device{height:20px;padding-left:13px;line-height:21px;letter-spacing:.2px}.selected{background:#e5e5e5}.phone{padding-left:23px}
.preview{width:130px;height:23px;margin:12px 0 0 21px;border:1px solid #c1c1c1;border-radius:2px;text-align:center;background:#fff}
.sidebar section{flex:none}.sidebar h3{font-size:13px;line-height:18px;color:#333;font-weight:600}
.size{height:73px;padding:5px 18px 0 16px;border-bottom:1px solid #c9c9c9}
.size-select{height:22px;margin-top:5px;border-bottom:1px solid #bbb;display:flex;justify-content:space-between;align-items:center}
.sheets{height:164px;padding-top:5px;border-bottom:1px solid #c9c9c9}
.sheets h3{padding-left:16px;margin-bottom:11px}
.sheet{height:20px;display:flex;padding-left:17px;gap:7px;font-size:13px}
.si{width:17px;height:18px;margin-top:3px}.hovered{background:#f3f3f3}
.objects{padding:2px 12px 0 10px}.sidebar .objects h3{font-weight:500}
.object-area{display:flex;justify-content:space-between;margin-top:5px;height:205px}
.object-list{padding-top:7px}.object-list div{height:20px;display:flex;gap:6px;color:#444;letter-spacing:.1px}
.object-list svg{width:13px;height:13px;margin:3px 0 0 4px;fill:none;stroke:#666}
.scroll{width:17px;background:#f0f0f0;display:flex;flex-direction:column;align-items:center;padding:7px 0 0}
.scroll b{width:13px;height:123px;background:#c1c1c1;margin:5px 0 54px}
.up{border:4px solid transparent;border-bottom:5px solid #a0a0a0;border-top:0}
.mode{height:24px;margin-top:6px;display:flex;line-height:23px;text-align:center}
.mode b{width:93px;background:#03638d;color:#fff;border-radius:2px 0 0 2px}.mode span{flex:1;border:1px solid #777;border-radius:0 2px 2px 0;color:#333;letter-spacing:.2px}
.show-title{margin:6px 0 0 6px;display:flex;align-items:center;gap:6px;color:#333}.show-title i{width:14px;height:14px;border:1px solid #222;background:#fff}
.map{margin:11px 0 0 12px}
.lanes{fill:none;stroke:#e2e2e2;stroke-width:2}
.parks,.park-fill{fill:#dae4d4}.water{fill:#c1d2d2}.river{fill:none;stroke:#c1d2d2;stroke-width:19}
.road{fill:none;stroke:#dedede;stroke-width:6}.casing{stroke:#f9f9f9;stroke-width:11}
.highway-edge{fill:none;stroke:#f8f8f8}.highway{fill:none;stroke:#ddd}
.shields{font:bold 9px "Open Sans",sans-serif;text-anchor:middle}
.place{text-anchor:middle;font:11.5px "Noto Sans",sans-serif;fill:#aaa9ac;paint-order:stroke;stroke:#f1f1f1;stroke-width:2px}
.place .city{font-size:22.500px;fill:#69666b}
.stations{fill:#6c8eb8;stroke:#9a999e;stroke-width:1.300}
.credit{font:12px Roboto,sans-serif;fill:#555}
.charts{margin:7px 0 0 3px;width:499px;flex:none;position:relative}
.hours{overflow:visible}
.cursor{position:absolute;left:-11px;top:501px}
.zone-edge{stroke:#c3d0e8;stroke-width:2;stroke-dasharray:10 2;fill:none}.thin{stroke-width:1}
.charts text{font-size:12px;fill:#777}.names,.end{text-anchor:end}.mid{text-anchor:middle}
.charts .head{fill:#333}.charts .marks text{fill:#222}
.legends{width:171px;position:relative;padding:10px 0 0 2px;color:#4a4a4a}
.legends h4{font-size:12px;line-height:20px;font-weight:400;color:#333}
.range{display:flex;justify-content:space-between;margin:2px 18px 0 5px;height:20px}
.slider{margin:1px 0 0 4px}
.size-head{margin-top:12px}
.sizes{letter-spacing:.3px;margin-top:-1px}
.sizes li{height:20px;display:flex;align-items:center;gap:3px}.sizes svg{width:18px;height:18px;margin-left:3px}.sizes circle{fill:#d5d6d7;stroke:#b2b2b2;stroke-width:1.500}
.second{margin-top:7px}.color-head{margin-top:12px}
.ramp{display:flex;gap:4px;padding-left:5px;margin-top:2px;letter-spacing:.25px}.ramp i{width:77px;height:17px;margin-top:1px;border:1px solid #8e9cae;background:linear-gradient(90deg,#b8daf2 0 10%,#a8d1ee 10% 20%,#94c1e7 20% 30%,#7aa5d2 30% 44%,#6b9bc5 44% 55%,#5d8fbd 55% 66%,#426da5 66% 83%,#36618f 83% 94%,#285780 94%)}
.filter-head{margin-top:23px}
.filter{margin-top:2px;letter-spacing:.15px}.filter li{display:flex;height:19px;gap:6px;align-items:center;padding-left:6px}.filter i{width:15px;height:14px;border:1px solid #666;border-radius:2px;display:flex;justify-content:center}.filter i:after{content:"";width:4px;height:8px;border:solid #555;border-width:0 2px 2px 0;transform:rotate(45deg)}
.block-head{margin-top:10px}.swatches{letter-spacing:.15px}.swatches li{height:20px;display:flex;gap:5px;align-items:center;padding-left:3px}.swatches i{width:14px;height:13px}
.afternoon{background:#a1caea}.evening{background:#ad5a2e}.morning{background:#136b9f}.night{background:#59576d}
.zone-menu{position:absolute;left:-2px;top:326px}
.tabs{height:30px;flex:none;background:#e5e5e5;border-top:1px solid #c8c8c8;border-bottom:1px solid #c8c8c8;display:flex;line-height:29px;color:#777}
.tabs div{border-right:1px solid #c8c8c8;padding-left:6px;display:flex;align-items:center;white-space:nowrap;flex:none}
.tabs svg{fill:none;stroke:#666}.tabs .t-source{width:129px;gap:5px;padding-left:7px}.t-map{width:90px}.t-rank{width:105px}.tabs .t-rank{padding-left:5px}.t-hour{width:97px}.t-user{width:115px}.tabs .t-active{width:200px;padding-left:7px;background:#fcfcfc;font-weight:600;gap:4px;color:#555;letter-spacing:.05px}.tabs .t-new{width:32px;padding-left:9px}
.status{height:20px;background:#ebebea;display:flex;font-size:11px;line-height:21px;color:#333;flex:none}
.status span{flex:none}.marks-count{width:88px;padding-left:2px}.dims{width:124px;padding-left:2px}.status svg{margin-left:auto}
```
